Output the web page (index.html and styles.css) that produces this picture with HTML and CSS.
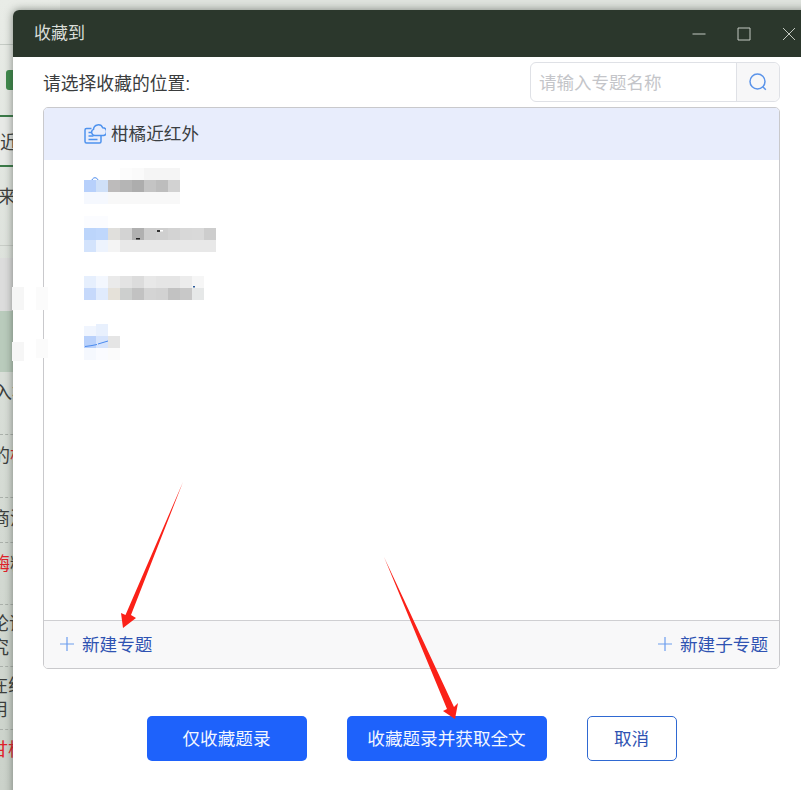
FILE: index.html
```html
<!DOCTYPE html>
<html lang="zh-CN">
<head>
<meta charset="utf-8">
<title>收藏到</title>
<link rel="stylesheet" href="styles.css">
</head>
<body>
<div class="page">
  <div class="backdrop">
    <div class="bd-top"></div>
    <div class="bd-chip-row"><span class="chip"></span></div>
    <div class="bd-tab"><span>近</span></div>
    <div class="bd-plain"><span class="off-a">未来</span></div>
    <div class="bd-gap"></div>
    <div class="bd-gray"></div>
    <div class="bd-green"></div>
    <div class="bd-row r63"><span class="off-b">入柑</span></div>
    <div class="bd-row r63"><span class="off-c">的<em>柑</em></span></div>
    <div class="bd-row r45"><span class="off-d">商洛</span></div>
    <div class="bd-row r62"><span class="off-d"><em>酶</em>精</span></div>
    <div class="bd-row r62 two"><span class="off-e">论证</span><span class="off-e">究</span></div>
    <div class="bd-row r63 two"><span class="off-f">在线</span><span class="off-f">用</span></div>
    <div class="bd-last"><span class="off-g"><em>甘柑</em></span></div>
  </div>

  <section class="dialog">
    <header class="dialog-head">
      <h1 class="dialog-title">收藏到</h1>
      <div class="win-controls">
        <svg class="win-icon" viewBox="0 0 14 14"><path d="M0.5 7h13"/></svg>
        <svg class="win-icon" viewBox="0 0 14 14"><path d="M1 1h12v12H1z"/></svg>
        <svg class="win-icon" viewBox="0 0 14 14"><path d="M1 1l12 12M13 1L1 13"/></svg>
      </div>
    </header>
    <div class="dialog-body">
      <div class="toolbar">
        <label class="toolbar-label">请选择收藏的位置:</label>
        <div class="search">
          <span class="search-input">请输入专题名称</span>
          <span class="search-btn">
            <svg class="search-icon" viewBox="0 0 20 20"><circle cx="9.5" cy="9.5" r="7.5"/><path d="M14.8 14.8l3 3"/></svg>
          </span>
        </div>
      </div>

      <div class="tree">
        <ul class="tree-list">
          <li class="tree-item selected">
            <svg class="topic-icon" viewBox="0 0 22 22">
              <path d="M7.500 6.500H2.500A1.500 1.500 0 0 0 1 8v11.500A1.500 1.500 0 0 0 2.500 21h13A1.500 1.500 0 0 0 17 19.500V13.500"/>
              <path d="M10.800 13.500a3.200 3.200 0 0 1-1.300-6.100 4.800 4.800 0 0 1 9.200-1.600 3.900 3.900 0 0 1 .8 7.700z"/>
              <path d="M4.500 10.500h3M4.500 14h5M4.500 17.500h9"/>
            </svg>
            <span class="item-label">柑橘近红外</span>
          </li>
          <li class="tree-item">
            <svg class="mosaic" width="132" height="48" viewBox="0 0 132 48">
              <path class="mosaic-stroke" d="M8 18c1-3 5-3 6 0"/>
              <rect x="48" y="6" width="12" height="12" fill="#fafafa"/><rect x="36" y="6" width="12" height="12" fill="#fcfcfc"/><rect x="60" y="6" width="36" height="12" fill="#f5f5f5"/>
              <rect x="0" y="18" width="12" height="12" fill="#b7d0fb"/><rect x="12" y="18" width="12" height="12" fill="#cfe0f8"/>
              <rect x="24" y="18" width="12" height="12" fill="#bdbbbb"/><rect x="36" y="18" width="12" height="12" fill="#b5b5b5"/><rect x="48" y="18" width="12" height="12" fill="#adadad"/><rect x="60" y="18" width="12" height="12" fill="#c4c4c4"/><rect x="72" y="18" width="12" height="12" fill="#bdbdbd"/><rect x="84" y="18" width="12" height="12" fill="#d2d2d2"/>
              <rect x="0" y="30" width="24" height="12" fill="#f5f8fe"/><rect x="24" y="30" width="72" height="12" fill="#f8f8f8"/>
            </svg>
          </li>
          <li class="tree-item">
            <svg class="mosaic" width="132" height="48" viewBox="0 0 132 48">
              <rect x="0" y="2" width="24" height="12" fill="#fbfcff"/>
              <rect x="0" y="14" width="12" height="12" fill="#bcd5fb"/><rect x="12" y="14" width="12" height="12" fill="#bfd7fc"/><rect x="24" y="14" width="12" height="12" fill="#e0dfdc"/><rect x="36" y="14" width="12" height="12" fill="#d3d3d3"/><rect x="48" y="14" width="12" height="12" fill="#b0b0b0"/><rect x="60" y="14" width="12" height="12" fill="#cdcdcd"/><rect x="72" y="14" width="12" height="12" fill="#cfcfcf"/><rect x="84" y="14" width="12" height="12" fill="#d3d3d3"/><rect x="96" y="14" width="12" height="12" fill="#d8d8d8"/><rect x="108" y="14" width="12" height="12" fill="#d9d9d9"/><rect x="120" y="14" width="12" height="12" fill="#cdcdcd"/>
              <rect x="0" y="26" width="12" height="12" fill="#d3e3fc"/><rect x="12" y="26" width="12" height="12" fill="#edf3fd"/><rect x="24" y="26" width="12" height="12" fill="#f4f4f4"/><rect x="36" y="26" width="96" height="12" fill="#e8e8e8"/>
              <rect x="52" y="24" width="4" height="1.500" fill="#222"/><rect x="73" y="16" width="3" height="2" fill="#333"/><rect x="76" y="16" width="3" height="1.500" fill="#fff"/>
            </svg>
          </li>
          <li class="tree-item">
            <svg class="mosaic" width="132" height="48" viewBox="0 0 132 48">
              <rect x="0" y="10" width="12" height="12" fill="#e6effd"/><rect x="12" y="10" width="12" height="12" fill="#f3f7fe"/><rect x="24" y="10" width="12" height="12" fill="#eaeaea"/><rect x="36" y="10" width="12" height="12" fill="#e3e3e3"/><rect x="48" y="10" width="12" height="12" fill="#dcdcdc"/><rect x="60" y="10" width="12" height="12" fill="#e8e8e8"/><rect x="72" y="10" width="24" height="12" fill="#e5e5e5"/><rect x="96" y="10" width="12" height="12" fill="#ececec"/><rect x="108" y="10" width="12" height="12" fill="#f6f6f6"/>
              <rect x="0" y="22" width="12" height="12" fill="#c6d9fb"/><rect x="12" y="22" width="12" height="12" fill="#e0ebfd"/><rect x="24" y="22" width="12" height="12" fill="#e5e1d9"/><rect x="36" y="22" width="12" height="12" fill="#cdcfce"/><rect x="48" y="22" width="12" height="12" fill="#c2c2c2"/><rect x="60" y="22" width="12" height="12" fill="#d4d4d4"/><rect x="72" y="22" width="12" height="12" fill="#d2d2d2"/><rect x="84" y="22" width="12" height="12" fill="#c2c2c2"/><rect x="96" y="22" width="12" height="12" fill="#c8c8c8"/><rect x="108" y="22" width="12" height="12" fill="#e6e8e8"/>
              <rect x="109" y="20" width="2" height="1.500" fill="#2a5a9a"/>
            </svg>
          </li>
          <li class="tree-item">
            <svg class="mosaic" width="132" height="48" viewBox="0 0 132 48">
              <rect x="0" y="8" width="12" height="10" fill="#f0f5fe"/><rect x="12" y="6" width="12" height="12" fill="#e8f0fd"/>
              <rect x="0" y="18" width="12" height="12" fill="#b9d1fb"/><rect x="12" y="18" width="12" height="12" fill="#d5e3fc"/><rect x="24" y="18" width="12" height="12" fill="#e5e5e5"/>
              <rect x="0" y="30" width="12" height="12" fill="#f5f8fe"/><rect x="12" y="30" width="12" height="12" fill="#fafbff"/><rect x="24" y="30" width="12" height="12" fill="#fbfbfb"/>
              <path class="mosaic-stroke" d="M1 28.500c4-.5 8-1 12-2M14 26l10-3"/>
            </svg>
          </li>
        </ul>
        <footer class="tree-foot">
          <a class="foot-link">
            <svg class="plus" viewBox="0 0 14 14"><path d="M7 0v14M0 7h14"/></svg>
            <span class="foot-text">新建专题</span>
          </a>
          <a class="foot-link">
            <svg class="plus" viewBox="0 0 14 14"><path d="M7 0v14M0 7h14"/></svg>
            <span class="foot-text">新建子专题</span>
          </a>
        </footer>
      </div>

      <div class="actions">
        <button class="btn primary narrow">仅收藏题录</button>
        <button class="btn primary wide">收藏题录并获取全文</button>
        <button class="btn ghost">取消</button>
      </div>
    </div>
  </section>

  <svg class="overlay" width="801" height="790" viewBox="0 0 801 790">
    <rect x="12" y="287" width="12" height="23" fill="#f6f6f6"/>
    <rect x="36" y="287" width="12" height="23" fill="#fbfbfb"/>
    <rect x="12" y="342" width="12" height="19" fill="#f6f6f6"/>
    <rect x="36" y="339" width="12" height="19" fill="#fbfbfb"/>
    <polygon fill="#fb2118" points="183,482 131,615 136,618 123,628 121,613 125.500,615"/>
    <polygon fill="#fb2118" points="384,557 447,709 443,711 455,719 458,703 454,707"/>
  </svg>
</div>
</body>
</html>
```

FILE: styles.css
```css
* { box-sizing: border-box; }

html, body {
  margin: 0;
  padding: 0;
}

body {
  font-family: "Liberation Sans", "Noto Sans CJK SC", sans-serif;
  background: #dfe3de;
}

.page {
  position: relative;
  width: 801px;
  height: 790px;
  overflow: hidden;
}

/* page behind the dialog */
.backdrop {
  width: 60px;
  height: 790px;
  overflow: hidden;
  background: linear-gradient(180deg, #e9ece7 0%, #dbe0da 40%, #cbd2ca 100%);
  font-size: 18px;
  line-height: 24px;
  color: #3c3f3d;
  white-space: nowrap;
}

.backdrop em { font-style: normal; color: #e0222a; }
.backdrop span { display: block; }

.bd-top { height: 45px; border-bottom: 1px solid #c5cbc5; }
.bd-chip-row { height: 70px; padding: 25px 0 0 6px; }
.chip { width: 14px; height: 20px; border-radius: 3px; background: #3f8a4c; }
.bd-tab { height: 52px; padding-top: 14px; background: #e7e9e6; border-top: 2px solid #3b7a48; border-bottom: 2px solid #3b7a48; }
.bd-plain { height: 78px; padding-top: 18px; }
.bd-gap { height: 13px; border-top: 1px solid #c8cdc7; }
.bd-gray { height: 53px; background: #dcdcdc; }
.bd-green { height: 61px; background: #b9cbbc; }
.bd-row { border-bottom: 1px dashed #aab0aa; padding-top: 9px; }
.bd-row.two { padding-top: 7px; }
.r63 { height: 63px; }
.r62 { height: 62px; }
.r45 { height: 45px; }
.bd-last { padding-top: 8px; }
.off-a { margin-left: -20px; }
.off-b { margin-left: -6px; }
.off-c { margin-left: -8px; }
.off-d { margin-left: -8px; }
.off-e { margin-left: -9px; }
.off-f { margin-left: -10px; }
.off-g { margin-left: -10px; }

/* dialog */
.dialog {
  position: absolute;
  left: 13px;
  top: 10px;
  width: 800px;
  height: 800px;
  background: #fff;
  border-radius: 6px 0 0 0;
  box-shadow: 0 0 8px rgba(40, 50, 40, .55);
}

.dialog-head {
  display: flex;
  align-items: center;
  justify-content: space-between;
  height: 47px;
  padding: 0 0 0 21px;
  background: #2b372c;
  border-radius: 6px 0 0 0;
}

.dialog-title {
  margin: 0;
  padding-bottom: 5px;
  font-size: 17px;
  font-weight: 400;
  color: #d9ddd8;
}

.win-controls {
  display: flex;
  gap: 31px;
  margin-right: 17px;
}

.win-icon {
  width: 14px;
  height: 14px;
  fill: none;
  stroke: #c3c9c1;
  stroke-width: 1;
}

.dialog-body {
  width: 767px;
  padding-left: 30px;
}

.toolbar {
  display: flex;
  justify-content: space-between;
  height: 50px;
  padding-top: 5px;
}

.toolbar-label {
  margin-top: 9px;
  font-size: 17.800px;
  line-height: 27px;
  color: #3a3c3d;
}

.search {
  display: flex;
  width: 250px;
  height: 40px;
  border: 1px solid #dfe1e6;
  border-radius: 6px;
}

.search-input {
  flex: 1;
  padding-left: 8px;
  font-size: 17.500px;
  line-height: 40px;
  color: #c4c5c9;
}

.search-btn {
  display: flex;
  align-items: center;
  justify-content: center;
  width: 43px;
  border-left: 1px solid #dfe1e6;
  border-radius: 0 6px 6px 0;
  background: #f7f7f8;
}

.search-icon {
  width: 20px;
  height: 20px;
  fill: none;
  stroke: #5b94ea;
  stroke-width: 1.500;
}

.tree {
  display: flex;
  flex-direction: column;
  width: 737px;
  height: 562px;
  border: 1px solid #c9c9cc;
  border-radius: 5px;
  overflow: hidden;
}

.tree-list {
  flex: 1;
  margin: 0;
  padding: 0;
  list-style: none;
}

.tree-item {
  display: flex;
  align-items: center;
  height: 52px;
  padding-left: 40px;
  font-size: 17.600px;
  color: #3a3e42;
}

.tree-item.selected { background: #e8edfc; }

.item-label { padding-bottom: 4px; }

.topic-icon {
  width: 22px;
  height: 22px;
  margin: -2px 5px 0 0;
  fill: none;
  stroke: #4e92ee;
  stroke-width: 1.500;
}

.mosaic { display: block; }

.mosaic-stroke {
  fill: none;
  stroke: #4a8aee;
  stroke-width: 1;
}

.tree-foot {
  display: flex;
  align-items: center;
  justify-content: space-between;
  height: 48px;
  padding: 0 11px 0 16px;
  border-top: 1px solid #cfcfd2;
  background: #f8f8f9;
}

.foot-link {
  display: flex;
  align-items: center;
  gap: 8px;
  font-size: 17.600px;
  color: #2f53b2;
}

.foot-text { padding-bottom: 2px; }

.plus {
  width: 14px;
  height: 14px;
  margin-top: -2px;
  fill: none;
  stroke: #6c9dee;
  stroke-width: 1.200;
}

.actions {
  display: flex;
  justify-content: center;
  gap: 40px;
  width: 737px;
  margin-top: 47px;
}

.btn {
  height: 45px;
  padding: 0 0 3px;
  border-radius: 5px;
  font-family: inherit;
  font-size: 17.600px;
}

.primary {
  border: 0;
  background: #1e62fb;
  color: #f2f6ff;
}

.narrow { width: 160px; }
.wide { width: 200px; }

.ghost {
  width: 90px;
  border: 1px solid #2f69d2;
  background: #fff;
  color: #2f53b2;
}

.overlay {
  position: absolute;
  left: 0;
  top: 0;
  pointer-events: none;
}
```
